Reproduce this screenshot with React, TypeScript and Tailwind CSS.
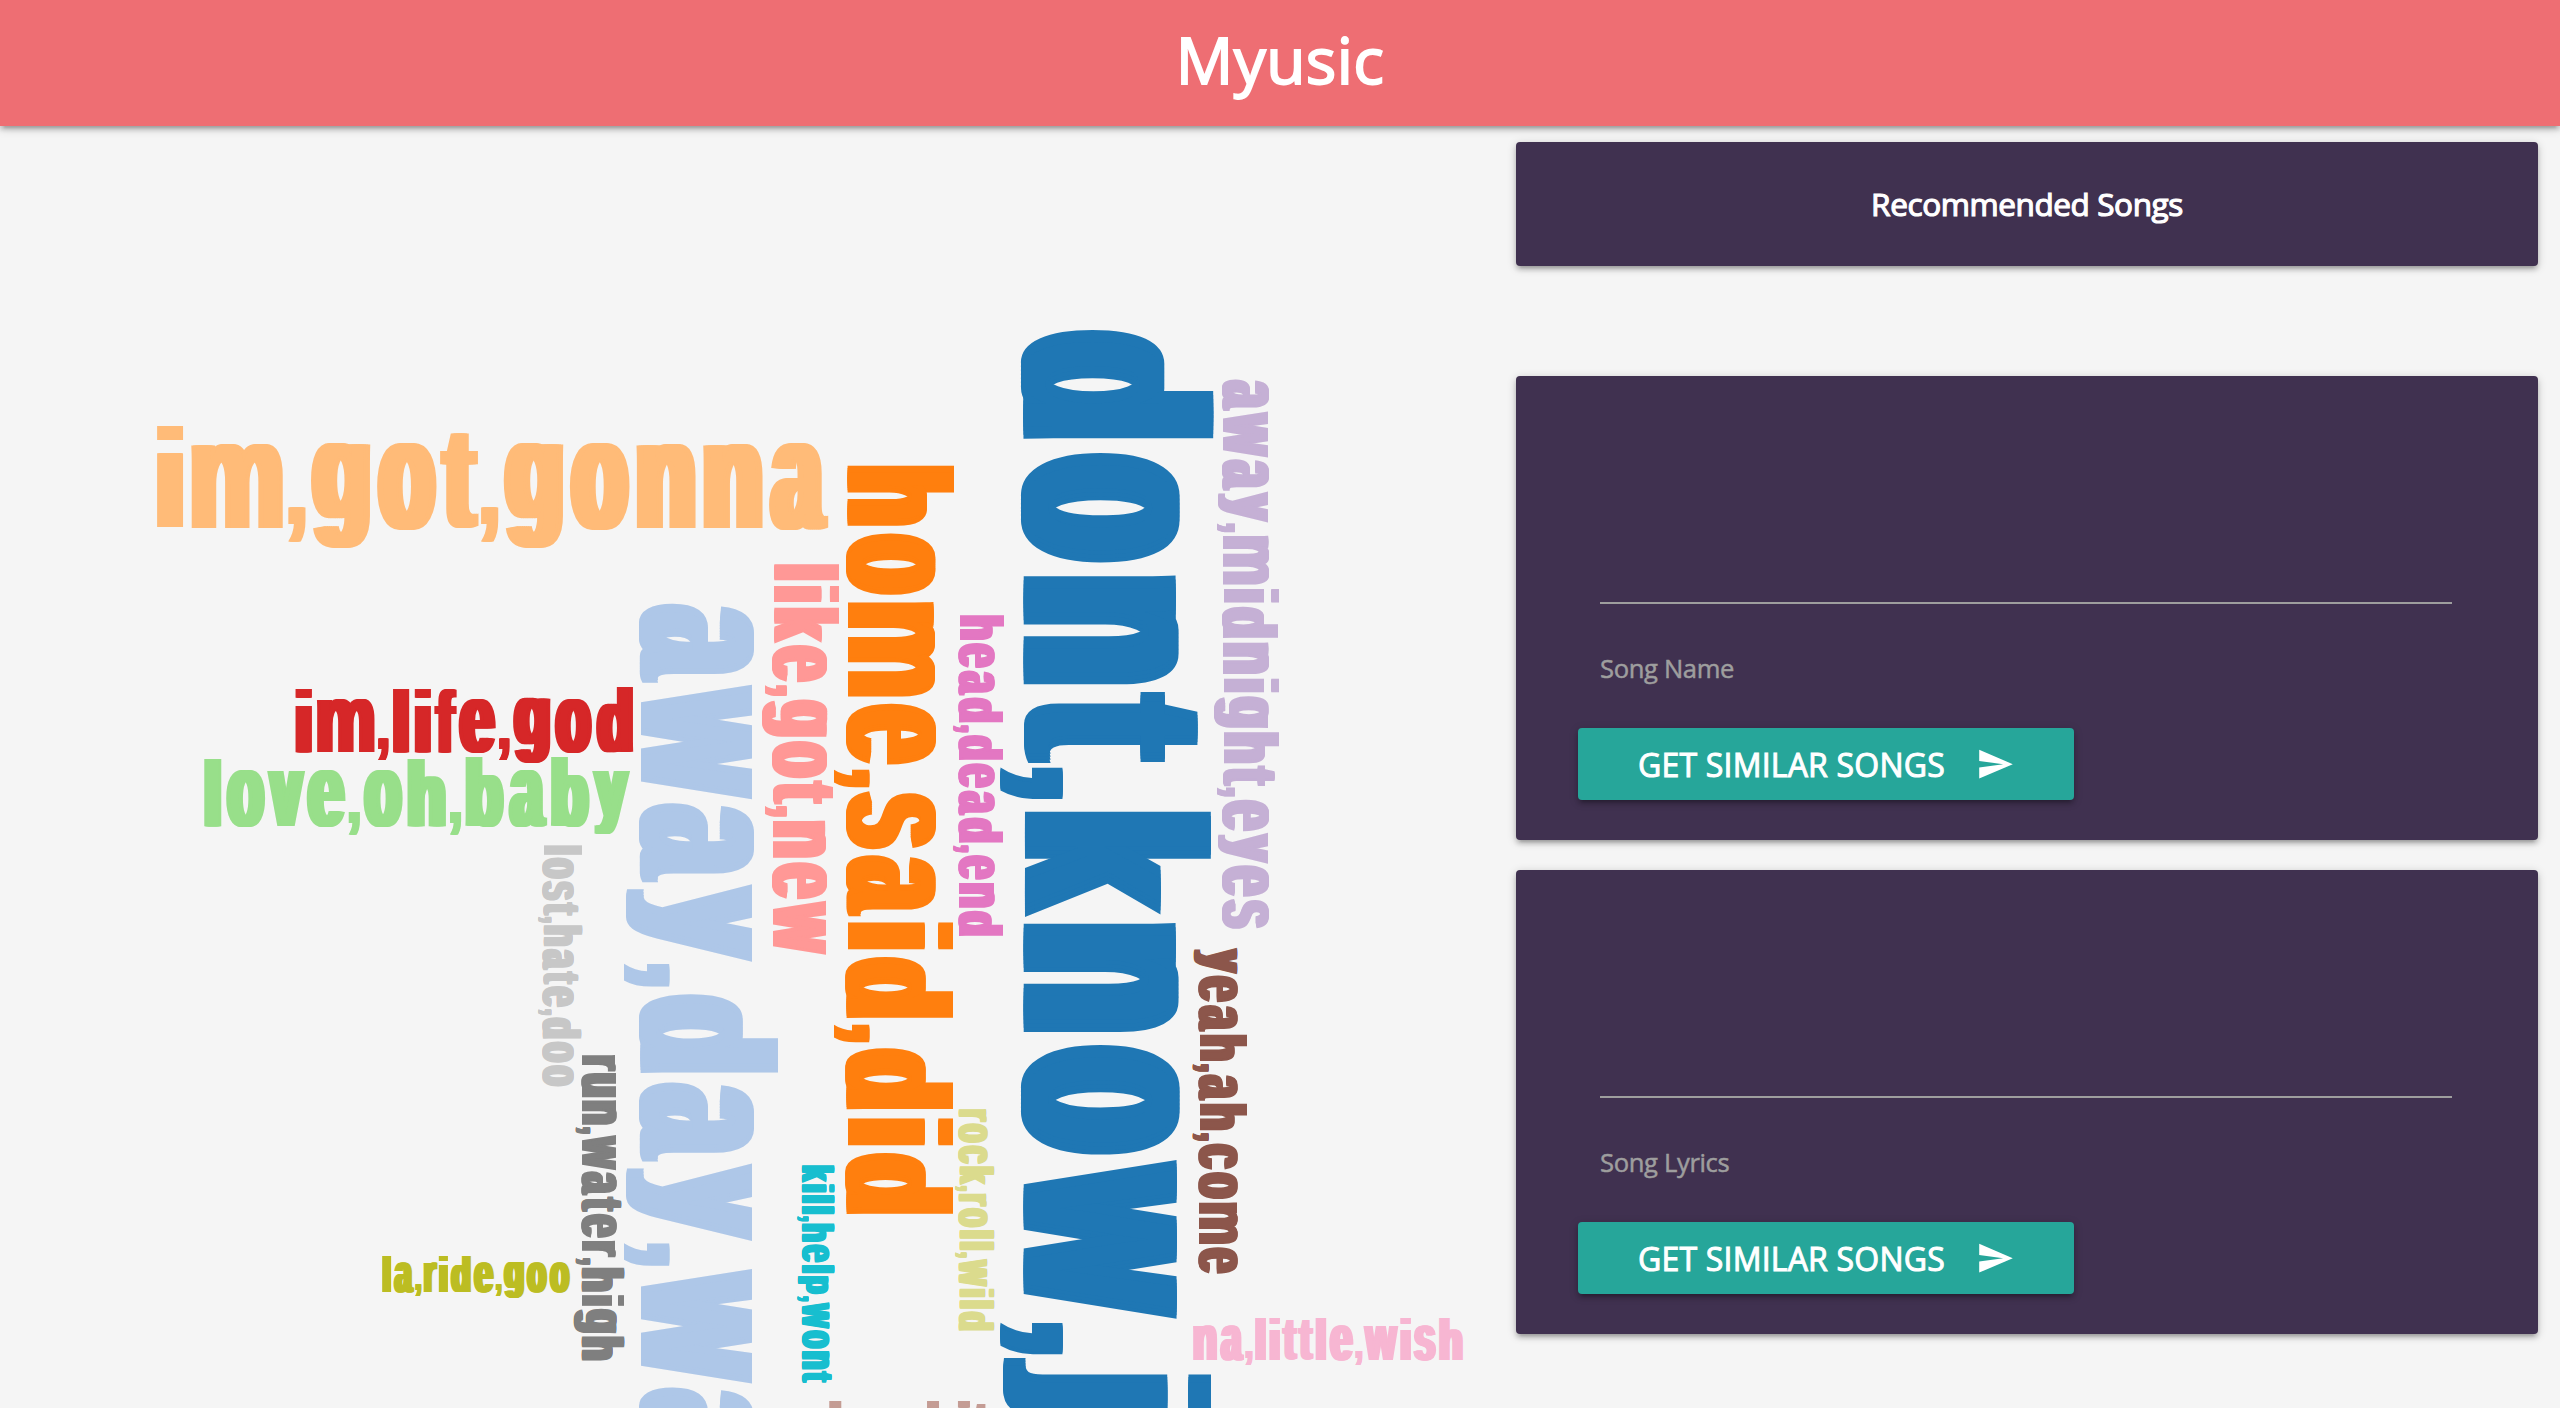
import React from "react";

type Word = {
  text: string;
  color: string;
  size: number;
  x: number;
  y: number;
  length?: number;
  vertical?: boolean;
};

// Poster lettering metrics per glyph, in em:
// [left bearing, ink width, advance, height above baseline, depth below baseline].
const METRICS: Record<string, [number, number, number, number, number]> = {
  a: [0.02, 0.465, 0.494, 0.66, 0.012],
  b: [0.033, 0.46, 0.52, 0.8, 0.012],
  c: [0.026, 0.454, 0.492, 0.66, 0.012],
  d: [0.026, 0.46, 0.519, 0.8, 0.012],
  e: [0.025, 0.463, 0.508, 0.66, 0.012],
  f: [0.008, 0.278, 0.283, 0.79, 0],
  g: [0.026, 0.463, 0.514, 0.66, 0.15],
  h: [0.033, 0.457, 0.52, 0.8, 0],
  i: [0.031, 0.21, 0.27, 0.79, 0],
  j: [-0.005, 0.25, 0.28, 0.79, 0.09],
  k: [0.033, 0.449, 0.474, 0.79, 0],
  l: [0.031, 0.21, 0.27, 0.79, 0],
  m: [0.031, 0.714, 0.768, 0.655, 0],
  n: [0.031, 0.461, 0.52, 0.655, 0],
  o: [0.024, 0.467, 0.512, 0.66, 0.012],
  p: [0.033, 0.46, 0.52, 0.66, 0.1],
  r: [0.033, 0.312, 0.342, 0.655, 0],
  s: [0.012, 0.44, 0.471, 0.66, 0.012],
  t: [0.002, 0.304, 0.305, 0.736, 0],
  u: [0.03, 0.462, 0.52, 0.647, 0.01],
  v: [-0.002, 0.455, 0.44, 0.647, 0],
  w: [-0.002, 0.671, 0.669, 0.647, 0],
  y: [0, 0.455, 0.448, 0.647, 0.09],
  ",": [0.015, 0.138, 0.1675, 0.163, 0.1],
};

const FAMILY = '"Liberation Sans", Arial, sans-serif';
const WEIGHT = 700;

// How far each upright stem is widened, in em; letters with several narrow counters get less.
const SPREAD = 0.051;
const NARROW_SPREAD: Record<string, number> = { m: 0.038, w: 0.042, s: 0.044, a: 0.047, e: 0.047 };

const WORDS: Word[] = [
  { text: "dont,know,j", color: "#1f77b4", size: 237, x: 1023.7, y: 329.8, vertical: true },
  { text: "away,day,wa", color: "#aec7e8", size: 171.5, x: 641, y: 603.3, vertical: true },
  { text: "home,said,did", color: "#ff7f0e", size: 133.5, x: 847.5, y: 465.3, length: 748.7, vertical: true },
  { text: "im,got,gonna", color: "#ffbb78", size: 129, x: 156.5, y: 528, length: 672 },
  { text: "love,oh,baby", color: "#98df8a", size: 85, x: 203.8, y: 826, length: 426.6 },
  { text: "im,life,god", color: "#d62728", size: 81, x: 295.2, y: 752, length: 337.9 },
  { text: "like,got,new", color: "#ff9896", size: 81.5, x: 773.3, y: 563.8, length: 391, vertical: true },
  { text: "away,midnight,eyes", color: "#c5b0d5", size: 69.6, x: 1223.3, y: 379.2, length: 550, vertical: true },
  { text: "yeah,ah,come", color: "#8c564b", size: 59, x: 1199.3, y: 947.7, length: 326.3, vertical: true },
  { text: "hey,hit", color: "#c49c94", size: 59.5, x: 829, y: 1448.5 },
  { text: "head,dead,end", color: "#e377c2", size: 55, x: 959.3, y: 615.2, length: 320.7, vertical: true },
  { text: "na,little,wish", color: "#f7b6d2", size: 53, x: 1193, y: 1359.8, length: 270 },
  { text: "run,water,high", color: "#7f7f7f", size: 53, x: 581.5, y: 1055, length: 305.4, vertical: true },
  { text: "lost,hate,doo", color: "#c7c7c7", size: 47.5, x: 543.3, y: 845.1, length: 241.5, vertical: true },
  { text: "la,ride,goo", color: "#bcbd22", size: 45.5, x: 382, y: 1292, length: 188 },
  { text: "rock,roll,wild", color: "#dbdb8d", size: 43.5, x: 959.3, y: 1109, length: 221.7, vertical: true },
  { text: "kill,help,wont", color: "#17becf", size: 40.5, x: 801.7, y: 1165, length: 218, vertical: true },
];

const context = document.createElement("canvas").getContext("2d")!;

function glyphInk(char: string) {
  context.font = `${WEIGHT} 200px ${FAMILY}`;
  const m = context.measureText(char);
  return {
    left: -m.actualBoundingBoxLeft / 200,
    width: (m.actualBoundingBoxLeft + m.actualBoundingBoxRight) / 200,
    ascent: m.actualBoundingBoxAscent / 200,
    descent: m.actualBoundingBoxDescent / 200,
    advance: m.width / 200,
  };
}

function CloudWord({ text, color, size, x, y, length, vertical }: Word) {
  const chars = text.split("");
  const first = METRICS[chars[0]];
  const last = METRICS[chars[chars.length - 1]];
  const advances = chars.reduce((sum, c) => sum + METRICS[c][2], 0);
  const natural = advances - first[0] - (last[2] - last[0] - last[1]);
  const em = length ? length / natural : size;

  let pen = -first[0] * em;
  const glyphs = chars.map((char) => {
    const [bearing, width, advance, height, depth] = METRICS[char];
    const ink = glyphInk(char);
    const spread = Math.min(NARROW_SPREAD[char] ?? SPREAD, width * 0.13) * em;
    const fontSize = ((height + depth) * size) / (ink.ascent + ink.descent);
    const scale = (width * em - 2 * spread) / (ink.width * fontSize);
    const glyph = {
      char,
      fontSize,
      x: pen + bearing * em + spread - ink.left * fontSize * scale,
      y: depth * size - ink.descent * fontSize,
      length: ink.advance * fontSize * scale,
      shadow: [-1, -0.66, -0.33, 0.33, 0.66, 1].map((d) => `${(d * spread) / scale}px 0 0 ${color}`).join(", "),
    };
    pen += advance * em;
    return glyph;
  });

  return (
    <text
      transform={`translate(${x} ${y})${vertical ? " rotate(90)" : ""}`}
      fill={color}
      fontWeight={WEIGHT}
      fontFamily={FAMILY}
    >
      {glyphs.map((g, i) => (
        <tspan
          key={i}
          x={g.x}
          y={g.y}
          fontSize={g.fontSize}
          textLength={g.length}
          lengthAdjust="spacingAndGlyphs"
          style={{ textShadow: g.shadow }}
        >
          {g.char}
        </tspan>
      ))}
    </text>
  );
}

const DEPTH =
  "shadow-[0_4px_4px_0_rgba(0,0,0,0.14),0_6px_2px_-4px_rgba(0,0,0,0.12),0_2px_10px_0_rgba(0,0,0,0.2)]";

function SendIcon() {
  return (
    <svg viewBox="0 0 24 24" className="h-[38.4px] w-[38.4px] fill-white" aria-hidden="true">
      <path d="M2.01 21L23 12 2.01 3 2 10l15 2-15 2z" />
    </svg>
  );
}

function SongForm({ label }: { label: string }) {
  return (
    <section className={`flex h-[464px] flex-col items-start rounded-[4px] bg-[#403150] ${DEPTH}`}>
      <div className="mx-[84px] h-[228px] w-[852px] border-b-2 border-[#9e9e9e]" />
      <label className="ml-[84px] mt-[47px] h-9 whitespace-nowrap text-[25.6px] leading-9 tracking-[-0.35px] text-[#9e9e9e] [-webkit-text-stroke:0.5px_#9e9e9e]">
        {label}
      </label>
      <button
        className={`ml-[62px] mt-[41px] flex h-[72px] w-[496px] items-center rounded-[4px] bg-[#26a69a] pl-[60px] text-[32px] text-white ${DEPTH}`}
      >
        <span className="w-[338px] whitespace-nowrap pt-0.5 text-left tracking-[0.2px] [-webkit-text-stroke:1px_white]">
          GET SIMILAR SONGS
        </span>
        <SendIcon />
      </button>
    </section>
  );
}

export default function App() {
  return (
    <div className="flex h-[1408px] w-[2560px] flex-col overflow-hidden bg-[#f5f5f5] font-['Open_Sans','Noto_Sans',sans-serif]">
      <header className={`flex h-[126px] shrink-0 items-center justify-center bg-[#ee6e73] pb-1.5 ${DEPTH}`}>
        <h1 className="text-[64px] leading-none tracking-[0.4px] text-white [-webkit-text-stroke:1.9px_white]">Myusic</h1>
      </header>
      <main className="flex min-h-0 flex-1">
        <svg viewBox="0 126 1516 1282" className="h-[1282px] w-[1516px] shrink-0">
          {WORDS.map((word) => (
            <CloudWord key={word.text} {...word} />
          ))}
        </svg>
        <aside className="flex w-[1022px] flex-col pt-4">
          <section
            className={`mb-[110px] flex h-[124px] items-center justify-center rounded-[4px] bg-[#403150] ${DEPTH}`}
          >
            <h2 className="text-[31.5px] tracking-[-0.4px] text-white [-webkit-text-stroke:1.2px_white]">
              Recommended Songs
            </h2>
          </section>
          <div className="flex flex-col gap-[30px]">
            <SongForm label="Song Name" />
            <SongForm label="Song Lyrics" />
          </div>
        </aside>
      </main>
    </div>
  );
}
